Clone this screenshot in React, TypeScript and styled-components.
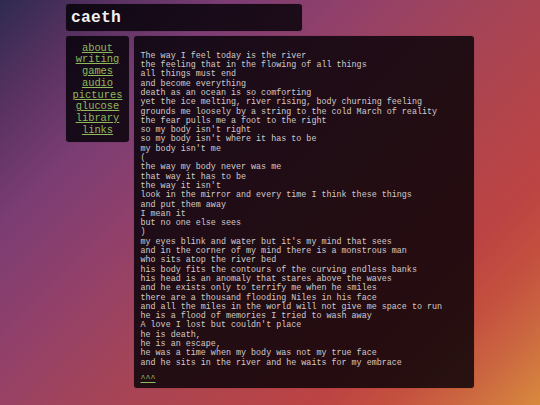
import React from "react";
import styled, { createGlobalStyle } from "styled-components";

const GlobalStyle = createGlobalStyle`
  html, body {
    margin: 0;
    padding: 0;
  }
  body {
    min-height: 405px;
    background: linear-gradient(
      135deg,
      #2f2a50 0%,
      #5a3262 12%,
      #7b3d74 24%,
      #92406a 38%,
      #a44458 52%,
      #b0444c 64%,
      #bc4343 76%,
      #c4503f 84%,
      #cc6a40 92%,
      #d98a3e 100%
    );
    font-family: "Liberation Mono", "Courier New", monospace;
  }
`;

const Page = styled.div`
  width: 408px;
  margin: 0 auto;
  padding-top: 4px;
  padding-bottom: 16px;
`;

const Panel = styled.div`
  background-color: rgba(3, 0, 5, 0.81);
  border-radius: 3px;
  box-shadow: 0 0 1px rgba(0, 0, 0, 0.4);
`;

const Header = styled(Panel)`
  width: 236px;
  height: 27px;
  padding-left: 5px;
  box-sizing: border-box;
`;

const Title = styled.h1`
  margin: 0;
  font-size: 16.3px;
  line-height: 27px;
  font-weight: 700;
  letter-spacing: 0.2px;
  color: #f2f0f0;
`;

const Row = styled.div`
  display: flex;
  align-items: flex-start;
  gap: 5px;
  margin-top: 5px;
`;

const Nav = styled(Panel)`
  width: 63px;
  flex-shrink: 0;
  padding: 6.5px 0 5.5px;
  display: flex;
  flex-direction: column;
  align-items: center;
`;

const NavLink = styled.a`
  font-size: 10.4px;
  line-height: 11.75px;
  color: #8fba5c;
  text-decoration: underline;
`;

const Main = styled(Panel)`
  flex: 1;
  padding: 6.5px 6px 2.5px 6.5px;
`;

const Poem = styled.div`
  font-size: 8.4px;
  line-height: 9.29px;
  color: #d2cbc9;
  white-space: pre;
`;

const UpLink = styled.a`
  font-size: 8.4px;
  line-height: 9.29px;
  color: #8fba5c;
  text-decoration: underline;
`;

const links = [
  "about",
  "writing",
  "games",
  "audio",
  "pictures",
  "glucose",
  "library",
  "links",
];

const poem = [
  "",
  "The way I feel today is the river",
  "the feeling that in the flowing of all things",
  "all things must end",
  "and become everything",
  "death as an ocean is so comforting",
  "yet the ice melting, river rising, body churning feeling",
  "grounds me loosely by a string to the cold March of reality",
  "the fear pulls me a foot to the right",
  "so my body isn't right",
  "so my body isn't where it has to be",
  "my body isn't me",
  "(",
  "the way my body never was me",
  "that way it has to be",
  "the way it isn't",
  "look in the mirror and every time I think these things",
  "and put them away",
  "I mean it",
  "but no one else sees",
  ")",
  "my eyes blink and water but it's my mind that sees",
  "and in the corner of my mind there is a monstrous man",
  "who sits atop the river bed",
  "his body fits the contours of the curving endless banks",
  "his head is an anomaly that stares above the waves",
  "and he exists only to terrify me when he smiles",
  "there are a thousand flooding Niles in his face",
  "and all the miles in the world will not give me space to run",
  "he is a flood of memories I tried to wash away",
  "A love I lost but couldn't place",
  "he is death,",
  "he is an escape,",
  "he was a time when my body was not my true face",
  "and he sits in the river and he waits for my embrace",
  "",
];

const App = () => {
  return (
    <>
      <GlobalStyle />
      <Page>
        <Header>
          <Title>caeth</Title>
        </Header>
        <Row>
          <Nav>
            {links.map(link => (
              <NavLink key={link} href={`#${link}`}>
                {link}
              </NavLink>
            ))}
          </Nav>
          <Main>
            <Poem>{poem.join("\n")}</Poem>
            <UpLink href="#top">^^^</UpLink>
          </Main>
        </Row>
      </Page>
    </>
  );
};

export default App;
